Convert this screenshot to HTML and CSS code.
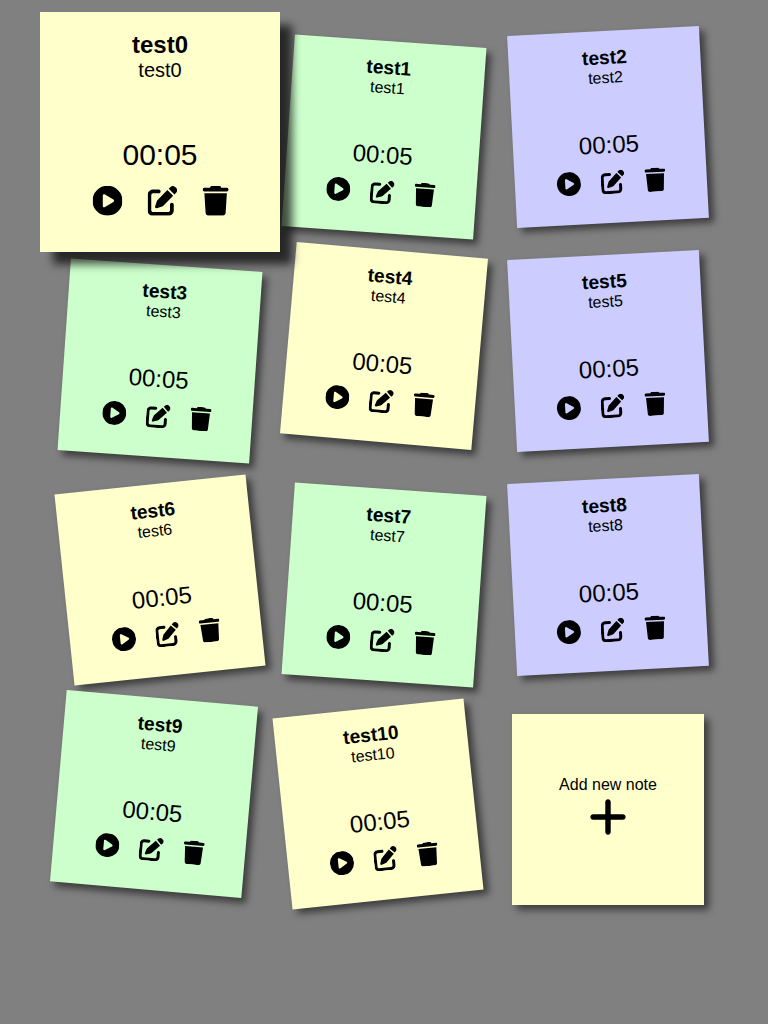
FILE: index.html
```
<!DOCTYPE html>
<html lang="en">
<head>
<meta charset="utf-8">
<title>Notes</title>
<link rel="stylesheet" href="styles.css">
</head>
<body>
<svg class="sprite" aria-hidden="true">
  <symbol id="play" viewBox="0 0 512 512"><path d="M0 256a256 256 0 1 1 512 0A256 256 0 1 1 0 256zM188.3 147.1c-7.6 4.2-12.3 12.3-12.3 20.9V344c0 8.7 4.7 16.7 12.3 20.9s16.8 4.1 24.3-.5l144-88c7.1-4.4 11.5-12.1 11.5-20.5s-4.4-16.1-11.5-20.5l-144-88c-7.4-4.5-16.7-4.7-24.3-.5z"/></symbol>
  <symbol id="edit" viewBox="0 0 512 512"><path d="M471.6 21.7c-21.9-21.9-57.3-21.9-79.2 0L362.3 51.7l97.9 97.9 30.1-30.1c21.9-21.9 21.9-57.3 0-79.2L471.6 21.7zm-299.2 220c-6.1 6.1-10.8 13.6-13.5 21.9l-29.6 88.8c-2.9 8.6-.6 18.1 5.8 24.6s15.9 8.7 24.6 5.8l88.8-29.6c8.2-2.7 15.7-7.4 21.9-13.5L437.7 172.3 339.7 74.3 172.4 241.7zM96 64C43 64 0 107 0 160V416c0 53 43 96 96 96H352c53 0 96-43 96-96V320c0-17.7-14.3-32-32-32s-32 14.3-32 32v96c0 17.7-14.3 32-32 32H96c-17.7 0-32-14.3-32-32V160c0-17.7 14.3-32 32-32h96c17.7 0 32-14.3 32-32s-14.3-32-32-32H96z"/></symbol>
  <symbol id="trash" viewBox="0 0 448 512"><path d="M135.2 17.7L128 32H32C14.3 32 0 46.3 0 64S14.3 96 32 96H416c17.7 0 32-14.3 32-32s-14.3-32-32-32H320l-7.2-14.3C307.4 6.8 296.3 0 284.2 0H163.8c-12.1 0-23.2 6.8-28.6 17.7zM416 128H32L53.2 467c1.6 25.3 22.6 45 47.9 45H346.9c25.3 0 46.3-19.7 47.9-45L416 128z"/></symbol>
  <symbol id="plus" viewBox="0 0 448 512"><path d="M256 80c0-17.7-14.3-32-32-32s-32 14.3-32 32V224H48c-17.7 0-32 14.3-32 32s14.3 32 32 32H192V432c0 17.7 14.3 32 32 32s32-14.3 32-32V288H400c17.7 0 32-14.3 32-32s-14.3-32-32-32H256V80z"/></symbol>
</svg>
<ul class="notes">
  <li class="note yellow active"><h2 class="title">test0</h2><p class="text">test0</p><div class="timer">00:05</div><div class="actions"><svg class="icon"><use href="#play"/></svg><svg class="icon"><use href="#edit"/></svg><svg class="icon narrow"><use href="#trash"/></svg></div></li>
  <li class="note green tilt-right"><h2 class="title">test1</h2><p class="text">test1</p><div class="timer">00:05</div><div class="actions"><svg class="icon"><use href="#play"/></svg><svg class="icon"><use href="#edit"/></svg><svg class="icon narrow"><use href="#trash"/></svg></div></li>
  <li class="note blue tilt-left"><h2 class="title">test2</h2><p class="text">test2</p><div class="timer">00:05</div><div class="actions"><svg class="icon"><use href="#play"/></svg><svg class="icon"><use href="#edit"/></svg><svg class="icon narrow"><use href="#trash"/></svg></div></li>
  <li class="note green tilt-right"><h2 class="title">test3</h2><p class="text">test3</p><div class="timer">00:05</div><div class="actions"><svg class="icon"><use href="#play"/></svg><svg class="icon"><use href="#edit"/></svg><svg class="icon narrow"><use href="#trash"/></svg></div></li>
  <li class="note yellow tilt-up"><h2 class="title">test4</h2><p class="text">test4</p><div class="timer">00:05</div><div class="actions"><svg class="icon"><use href="#play"/></svg><svg class="icon"><use href="#edit"/></svg><svg class="icon narrow"><use href="#trash"/></svg></div></li>
  <li class="note blue tilt-left"><h2 class="title">test5</h2><p class="text">test5</p><div class="timer">00:05</div><div class="actions"><svg class="icon"><use href="#play"/></svg><svg class="icon"><use href="#edit"/></svg><svg class="icon narrow"><use href="#trash"/></svg></div></li>
  <li class="note yellow"><h2 class="title">test6</h2><p class="text">test6</p><div class="timer">00:05</div><div class="actions"><svg class="icon"><use href="#play"/></svg><svg class="icon"><use href="#edit"/></svg><svg class="icon narrow"><use href="#trash"/></svg></div></li>
  <li class="note green tilt-right"><h2 class="title">test7</h2><p class="text">test7</p><div class="timer">00:05</div><div class="actions"><svg class="icon"><use href="#play"/></svg><svg class="icon"><use href="#edit"/></svg><svg class="icon narrow"><use href="#trash"/></svg></div></li>
  <li class="note blue tilt-left"><h2 class="title">test8</h2><p class="text">test8</p><div class="timer">00:05</div><div class="actions"><svg class="icon"><use href="#play"/></svg><svg class="icon"><use href="#edit"/></svg><svg class="icon narrow"><use href="#trash"/></svg></div></li>
  <li class="note green tilt-up"><h2 class="title">test9</h2><p class="text">test9</p><div class="timer">00:05</div><div class="actions"><svg class="icon"><use href="#play"/></svg><svg class="icon"><use href="#edit"/></svg><svg class="icon narrow"><use href="#trash"/></svg></div></li>
  <li class="note yellow"><h2 class="title">test10</h2><p class="text">test10</p><div class="timer">00:05</div><div class="actions"><svg class="icon"><use href="#play"/></svg><svg class="icon"><use href="#edit"/></svg><svg class="icon narrow"><use href="#trash"/></svg></div></li>
  <li class="note yellow add"><p>Add new note</p><svg class="plus"><use href="#plus"/></svg></li>
</ul>
</body>
</html>
```
FILE: styles.css
```
* {
  box-sizing: border-box;
  margin: 0;
  padding: 0;
}

body {
  background: #808080;
  color: #000;
  font: 16px "Liberation Sans", Arial, sans-serif;
}

.sprite {
  display: none;
}

.notes {
  display: flex;
  flex-wrap: wrap;
  justify-content: center;
  align-items: flex-start;
  padding: 20px 40px;
  list-style: none;
}

.note {
  display: flex;
  flex-direction: column;
  align-items: center;
  width: 192px;
  height: 192px;
  margin: 16px;
  padding: 16px;
  box-shadow: 5px 5px 7px rgba(33, 33, 33, 0.7);
  transform: rotate(-6deg);
}

.yellow { background: #ffc; }
.green { background: #cfc; }
.blue { background: #ccf; }

.tilt-right { transform: translateY(5px) rotate(4deg); }
.tilt-left { transform: translateY(-5px) rotate(-3deg); }
.tilt-up { transform: translateY(-10px) rotate(5deg); }

.active {
  z-index: 5;
  box-shadow: 10px 10px 7px rgba(0, 0, 0, 0.7);
  transform: scale(1.25);
}

.title {
  font-size: 19.2px;
  line-height: 21px;
}

.text {
  height: 62px;
  margin-top: 1px;
  line-height: 18px;
}

.timer {
  font-size: 24px;
  line-height: 27px;
}

.actions {
  display: flex;
  gap: 20px;
  margin-top: 12px;
}

.icon {
  width: 24px;
  height: 24px;
}

.narrow {
  width: 21px;
}

.add {
  height: 191.6px;
  margin: 21.6px;
  padding-top: 62.4px;
  line-height: 18px;
  transform: none;
}

.plus {
  width: 38px;
  height: 44px;
  margin-top: 1px;
}
```
